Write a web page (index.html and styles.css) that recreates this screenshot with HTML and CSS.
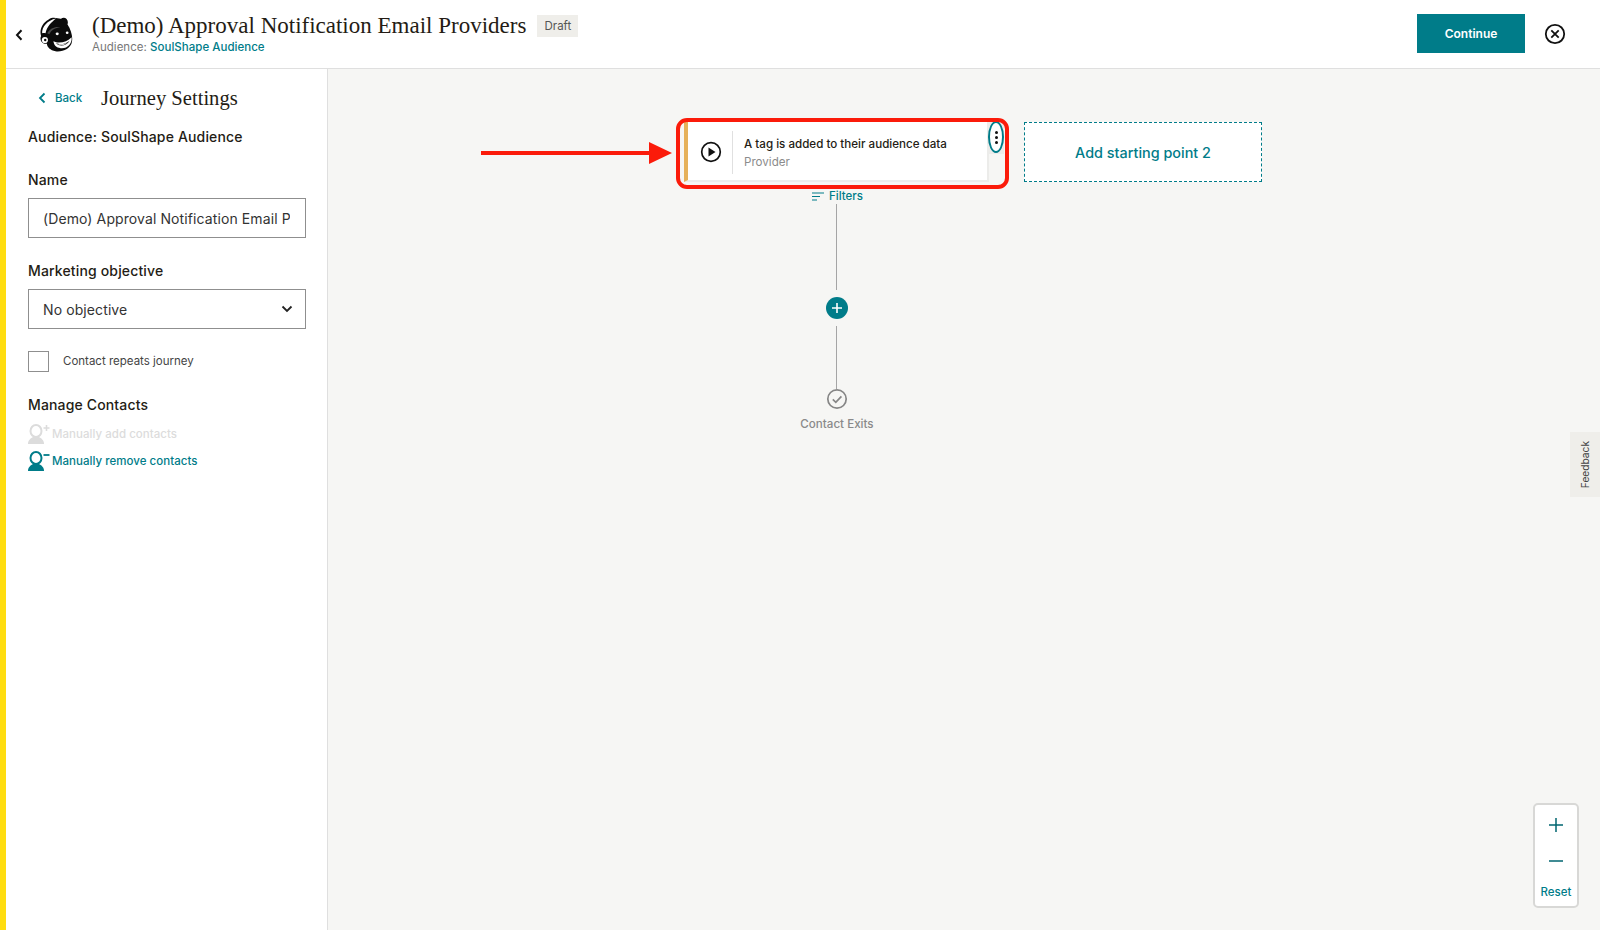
FILE: index.html
```html
<!DOCTYPE html>
<html lang="en">
<head>
<meta charset="utf-8">
<title>Journey Settings</title>
<link rel="stylesheet" href="styles.css">
</head>
<body>
<div class="app">
  <header class="topbar">
    <svg class="back-chevron" viewBox="0 0 8 12" width="8" height="12"><path d="M6.5 1.2 2 6l4.500 4.800" fill="none" stroke="#111" stroke-width="2"/></svg>
    <svg class="logo" viewBox="0 0 100 105" width="35" height="36">
      <path d="M30 10C45 0 58 9 66 8 76 0 90 9 85 25 95 40 101 60 98 75 95 95 70 106 50 103 35 100 25 91 25 81 12 83 2 71 8 58 3 45 8 22 30 10Z" fill="#0b0b0b"/>
      <path d="M11 50C10 32 26 12 52 7 38 17 24 32 21 50c-3-1-7-1-10 0z" fill="#fff"/>
      <path d="M26 50c8-13 22-20 38-17-14 1-26 8-32 20z" fill="#fff" opacity=".25"/>
      <circle cx="19" cy="70" r="9" fill="#fff"/>
      <circle cx="20" cy="70" r="3.500" fill="#0b0b0b"/>
      <path d="M44 74C60 82 84 76 97 62 99 80 85 96 65 94 52 93 45 85 44 74Z" fill="#fff"/>
      <path d="M51 79C64 86 80 81 91 72 84 86 62 92 51 79Z" fill="#0b0b0b"/>
      <path d="M55 81C65 84 76 82 85 77 77 85 64 87 55 81Z" fill="#fff"/>
      <ellipse cx="55" cy="52" rx="4.500" ry="3.800" fill="#fff"/>
      <ellipse cx="84" cy="49" rx="4" ry="3.500" fill="#fff"/>
    </svg>
    <div class="title-block">
      <div class="title-row">
        <h1 class="title">(Demo) Approval Notification Email Providers</h1>
        <span class="badge">Draft</span>
      </div>
      <div class="subtitle">Audience: <a class="link">SoulShape Audience</a></div>
    </div>
    <button class="continue">Continue</button>
    <svg class="close" viewBox="0 0 22 22" width="22" height="22"><circle cx="11" cy="11" r="9.200" fill="none" stroke="#111" stroke-width="1.800"/><path d="M7.300 7.300l7.400 7.400M14.700 7.300l-7.400 7.400" stroke="#111" stroke-width="1.800"/></svg>
  </header>
  <div class="main">
    <aside class="sidebar">
      <div class="side-head">
        <a class="back"><svg viewBox="0 0 8 12" width="8" height="12"><path d="M6.500 1.500 2 6l4.500 4.500" fill="none" stroke="#007c89" stroke-width="1.800"/></svg><span>Back</span></a>
        <h2 class="side-title">Journey Settings</h2>
      </div>
      <div class="strong audience">Audience: SoulShape Audience</div>
      <label class="strong field-label" for="name">Name</label>
      <input class="field" id="name" value="(Demo) Approval Notification Email Providers">
      <div class="strong field-label second">Marketing objective</div>
      <div class="field select"><span>No objective</span><svg viewBox="0 0 12 8" width="12" height="8"><path d="M1.500 1.500 6 6l4.500-4.500" fill="none" stroke="#222" stroke-width="1.800"/></svg></div>
      <div class="check-row"><span class="checkbox"></span><span class="check-label">Contact repeats journey</span></div>
      <div class="strong manage">Manage Contacts</div>
      <div class="contact-row disabled">
        <svg viewBox="0 0 24 22" width="24" height="22"><ellipse cx="8" cy="8" rx="5.500" ry="6" fill="none" stroke="currentColor" stroke-width="2"/><path d="M0 21c0-4 3-6 5-7h6c2 1 5 3 5 7z" fill="currentColor"/><path d="M15.500 5h6M18.500 2v6" stroke="currentColor" stroke-width="1.600"/></svg>
        <span>Manually add contacts</span>
      </div>
      <div class="contact-row active">
        <svg viewBox="0 0 24 22" width="24" height="22"><ellipse cx="8" cy="8" rx="5.500" ry="6" fill="none" stroke="currentColor" stroke-width="2"/><path d="M0 21c0-4 3-6 5-7h6c2 1 5 3 5 7z" fill="currentColor"/><path d="M15.500 5h6" stroke="currentColor" stroke-width="1.800"/></svg>
        <span>Manually remove contacts</span>
      </div>
    </aside>
    <section class="canvas">
      <div class="node-card">
        <svg class="play" viewBox="0 0 22 22" width="22" height="22"><circle cx="11" cy="11" r="9.300" fill="none" stroke="#111" stroke-width="1.700"/><path d="M8.500 6.500v9l7-4.500z" fill="#111"/></svg>
        <div class="node-text">
          <div class="node-title">A tag is added to their audience data</div>
          <div class="node-sub">Provider</div>
        </div>
      </div>
      <div class="kebab-base"></div>
      <div class="kebab"><i></i><i></i><i></i></div>
      <div class="highlight"></div>
      <svg class="arrow" viewBox="0 0 192 24" width="192" height="24"><path d="M0 10h168V1l23 11-23 11v-9H0z" fill="#fb1b0a"/></svg>
      <div class="add-start">Add starting point 2</div>
      <div class="filters"><svg viewBox="0 0 12 9" width="12" height="9"><path d="M0 1h12M0 4.500h8M0 8h5" stroke="#007c89" stroke-width="1.200"/></svg><span>Filters</span></div>
      <div class="line line-a"></div>
      <div class="plus-btn"><svg viewBox="0 0 12 12" width="12" height="12"><path d="M6 1v10M1 6h10" stroke="#fff" stroke-width="1.600"/></svg></div>
      <div class="line line-b"></div>
      <svg class="exit-icon" viewBox="0 0 22 22" width="22" height="22"><circle cx="11" cy="11" r="9.200" fill="none" stroke="#868686" stroke-width="1.700"/><path d="M6.800 11.300l3 3 5.600-6" fill="none" stroke="#868686" stroke-width="1.700"/></svg>
      <div class="exit-label">Contact Exits</div>
      <div class="feedback"><span>Feedback</span></div>
      <div class="zoom-box">
        <svg viewBox="0 0 16 16" width="16" height="16"><path d="M8 1v14M1 8h14" stroke="#006570" stroke-width="1.500"/></svg>
        <svg viewBox="0 0 16 16" width="16" height="16"><path d="M1 8h14" stroke="#006570" stroke-width="1.500"/></svg>
        <span>Reset</span>
      </div>
    </section>
  </div>
</div>
</body>
</html>
```
FILE: styles.css
```css
* { box-sizing: border-box; }
html, body { margin: 0; height: 100%; overflow: hidden; }
body { font-family: Inter, "Liberation Sans", sans-serif; color: #241c15; background: #fff; }
.app { height: 930px; border-left: 6px solid #ffdd0f; display: flex; flex-direction: column; }

.topbar { height: 69px; flex: none; display: flex; align-items: center; border-bottom: 1px solid #dfdfdf; padding-left: 9px; background: #fff; }
.back-chevron { flex: none; margin-top: 1px; }
.logo { flex: none; margin-left: 15px; margin-top: 0; }
.title-block { margin-left: 19px; flex: 1; margin-top: 0; }
.title-row { display: flex; align-items: center; gap: 11px; height: 22px; }
.title { margin: 0; font: 400 23px/26px "Liberation Serif", serif; color: #241c15; white-space: nowrap; }
.badge { background: #efeeea; color: #555; font-size: 11.500px; height: 22px; width: 41px; display: flex; align-items: center; justify-content: center; }
.subtitle { font-size: 11.500px; line-height: 14px; color: #777; margin-top: 3px; letter-spacing: .02px; }
.link { color: #007c89; font-weight: 500; }
.continue { width: 108px; height: 39px; border: 0; background: #007c89; color: #fff; font: 600 12px Inter, sans-serif; margin-right: 19px; margin-top: -1px; }
.close { flex: none; margin-right: 34px; }

.main { flex: 1; display: flex; min-height: 0; }
.sidebar { width: 322px; flex: none; border-right: 1px solid #dfdfdf; padding: 0 21px 0 22px; background: #fff; }
.side-head { display: flex; align-items: center; height: 57px; padding-left: 10px; padding-top: 1px; }
.back { display: flex; align-items: center; gap: 9px; color: #007c89; font-size: 11.500px; font-weight: 500; width: 63px; }
.side-title { margin: 0; font: 400 20.600px/24px "Liberation Serif", serif; white-space: nowrap; }
.strong { font-size: 14px; font-weight: 500; line-height: 20px; letter-spacing: .15px; }
.audience { margin-top: 1px; }
.field-label { display: block; margin-top: 23px; margin-bottom: 8px; }
.field-label.second { margin-top: 23px; }
.field { width: 100%; height: 40px; border: 1px solid #8f8f8f; background: #fff; display: flex; align-items: center; justify-content: space-between; padding: 0 15px 0 14px; font: 400 14px Inter, sans-serif; color: #333; letter-spacing: .1px; }
.select { padding-right: 12px; }
.check-row { display: flex; align-items: center; gap: 14px; margin-top: 22px; font-size: 11.500px; color: #444; }
.check-label { margin-top: -2px; }
.checkbox { width: 21px; height: 21px; border: 1px solid #8f8f8f; background: #fff; flex: none; }
.manage { margin-top: 23px; }
.contact-row { display: flex; align-items: center; font-size: 11.500px; font-weight: 500; height: 27px; letter-spacing: .03px; }
.contact-row svg { flex: none; }
.contact-row span { margin-top: 1px; }
.manage + .contact-row { margin-top: 5px; }
.disabled { color: #dcdcdc; }
.active { color: #007c89; }

.canvas { flex: 1; position: relative; background: #f6f6f4; overflow: hidden; }
.node-card { position: absolute; left: 356px; top: 53px; width: 305px; height: 60px; background: #fff; border-left: 4px solid #e6b15a; border-bottom: 2px solid #ececea; border-right: 2px solid #ececea; display: flex; align-items: center; }
.play { margin-left: 12px; margin-top: 1px; flex: none; }
.node-text { margin-left: 10px; padding-left: 11px; border-left: 1px solid #e0e0e0; height: 43px; margin-top: 3px; display: flex; flex-direction: column; justify-content: center; }
.node-title { font-size: 11.600px; line-height: 18px; font-weight: 500; color: #241c15; white-space: nowrap; }
.node-sub { font-size: 11.600px; line-height: 18px; color: #8c8c8c; }
.kebab-base { position: absolute; left: 660px; top: 52px; width: 16px; height: 33px; background: #ececea; }
.kebab { position: absolute; left: 660px; top: 52px; width: 16px; height: 32px; border: 2px solid #007c89; border-radius: 50%; background: #fff; display: flex; flex-direction: column; align-items: center; justify-content: center; gap: 2px; }
.kebab i { width: 3px; height: 3px; border-radius: 50%; background: #111; }
.highlight { position: absolute; left: 348px; top: 49px; width: 333px; height: 71px; border: 4px solid #fb1b0a; border-radius: 11px; }
.arrow { position: absolute; left: 153px; top: 72px; }
.add-start { position: absolute; left: 696px; top: 53px; width: 238px; height: 60px; border: 1px dashed #007c89; background: #fff; color: #007c89; font-size: 14.400px; font-weight: 500; display: flex; align-items: center; justify-content: center; }
.filters { position: absolute; left: 484px; top: 120px; height: 14px; display: flex; align-items: center; gap: 5px; font-size: 11.500px; font-weight: 500; color: #007c89; }
.line { position: absolute; left: 508px; width: 1px; background: #a5a5a5; }
.line-a { top: 135px; height: 86px; }
.plus-btn { position: absolute; left: 498px; top: 228px; width: 22px; height: 22px; border-radius: 50%; background: #007c89; display: flex; align-items: center; justify-content: center; }
.line-b { top: 257px; height: 63px; }
.exit-icon { position: absolute; left: 498px; top: 319px; }
.exit-label { position: absolute; left: 449px; top: 348px; width: 120px; text-align: center; font-size: 11.600px; font-weight: 500; color: #8a8a8a; }
.feedback { position: absolute; right: 0; top: 363px; width: 30px; height: 65px; background: #efeeea; display: flex; align-items: center; justify-content: center; }
.feedback span { writing-mode: vertical-rl; transform: rotate(180deg); font-size: 10.200px; color: #444; }
.zoom-box { position: absolute; left: 1205px; top: 734px; width: 46px; height: 105px; background: #fff; border: 2px solid #d8d8d6; border-radius: 5px; display: flex; flex-direction: column; align-items: center; padding-top: 12px; color: #007c89; font-size: 11.500px; font-weight: 500; }
.zoom-box svg + svg { margin-top: 20px; }
.zoom-box span { margin-top: 16px; }
```
